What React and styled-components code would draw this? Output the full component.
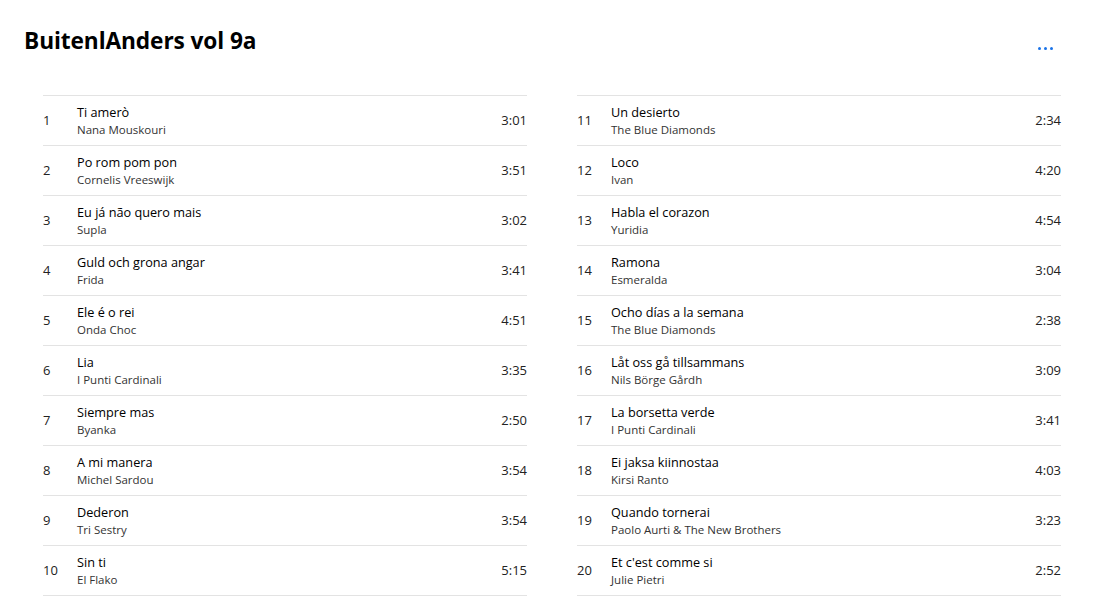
import React from "react";
import styled, { createGlobalStyle } from "styled-components";

const GlobalStyle = createGlobalStyle`
  html, body {
    margin: 0;
    padding: 0;
    background: #fff;
    font-family: "Segoe UI", "Open Sans", "Noto Sans", sans-serif;
  }
`;

const Page = styled.div`
  width: 1097px;
  height: 603px;
  overflow: hidden;
  box-sizing: border-box;
  padding: 24px 0 0 24px;
`;

const Header = styled.div`
  display: flex;
  align-items: flex-start;
  justify-content: space-between;
  width: 1029px;
  height: 71px;
`;

const Title = styled.h1`
  margin: 0;
  font-size: 22.7px;
  font-weight: 700;
  line-height: 33px;
  color: #000;
  letter-spacing: -0.1px;
`;

const MoreButton = styled.button`
  border: 0;
  background: none;
  padding: 0;
  margin-top: 23px;
  display: flex;
  gap: 3px;
  cursor: pointer;
`;

const Dot = styled.span`
  width: 3px;
  height: 3px;
  border-radius: 50%;
  background: #1a73e8;
`;

const Columns = styled.div`
  display: grid;
  grid-template-columns: 484px 484px;
  column-gap: 50px;
  margin-left: 19px;
`;

const List = styled.div`
  border-top: 1px solid #e3e3e3;
`;

const Row = styled.div`
  display: grid;
  grid-template-columns: 34px 1fr auto;
  align-items: center;
  height: 49px;
  border-bottom: 1px solid #e3e3e3;
`;

const Num = styled.div`
  font-size: 13px;
  color: #222;
  padding-bottom: 1px;
`;

const Info = styled.div`
  display: flex;
  flex-direction: column;
`;

const Song = styled.span`
  font-size: 12.7px;
  line-height: 18px;
  color: #000;
`;

const Artist = styled.span`
  font-size: 11.5px;
  line-height: 16px;
  margin-top: 1px;
  color: #333;
`;

const Duration = styled.div`
  font-size: 13px;
  color: #222;
  padding-bottom: 1px;
`;

const tracks = [
  ["Ti amerò", "Nana Mouskouri", "3:01"],
  ["Po rom pom pon", "Cornelis Vreeswijk", "3:51"],
  ["Eu já não quero mais", "Supla", "3:02"],
  ["Guld och grona angar", "Frida", "3:41"],
  ["Ele é o rei", "Onda Choc", "4:51"],
  ["Lia", "I Punti Cardinali", "3:35"],
  ["Siempre mas", "Byanka", "2:50"],
  ["A mi manera", "Michel Sardou", "3:54"],
  ["Dederon", "Tri Sestry", "3:54"],
  ["Sin ti", "El Flako", "5:15"],
  ["Un desierto", "The Blue Diamonds", "2:34"],
  ["Loco", "Ivan", "4:20"],
  ["Habla el corazon", "Yuridia", "4:54"],
  ["Ramona", "Esmeralda", "3:04"],
  ["Ocho días a la semana", "The Blue Diamonds", "2:38"],
  ["Låt oss gå tillsammans", "Nils Börge Gårdh", "3:09"],
  ["La borsetta verde", "I Punti Cardinali", "3:41"],
  ["Ei jaksa kiinnostaa", "Kirsi Ranto", "4:03"],
  ["Quando tornerai", "Paolo Aurti & The New Brothers", "3:23"],
  ["Et c'est comme si", "Julie Pietri", "2:52"],
];

function TrackList({ items, start }) {
  return (
    <List>
      {items.map(([song, artist, time], i) => (
        <Row key={song}>
          <Num>{start + i}</Num>
          <Info>
            <Song>{song}</Song>
            <Artist>{artist}</Artist>
          </Info>
          <Duration>{time}</Duration>
        </Row>
      ))}
    </List>
  );
}

export default function App() {
  return (
    <Page>
      <GlobalStyle />
      <Header>
        <Title>BuitenlAnders vol 9a</Title>
        <MoreButton aria-label="More">
          <Dot />
          <Dot />
          <Dot />
        </MoreButton>
      </Header>
      <Columns>
        <TrackList items={tracks.slice(0, 10)} start={1} />
        <TrackList items={tracks.slice(10)} start={11} />
      </Columns>
    </Page>
  );
}
